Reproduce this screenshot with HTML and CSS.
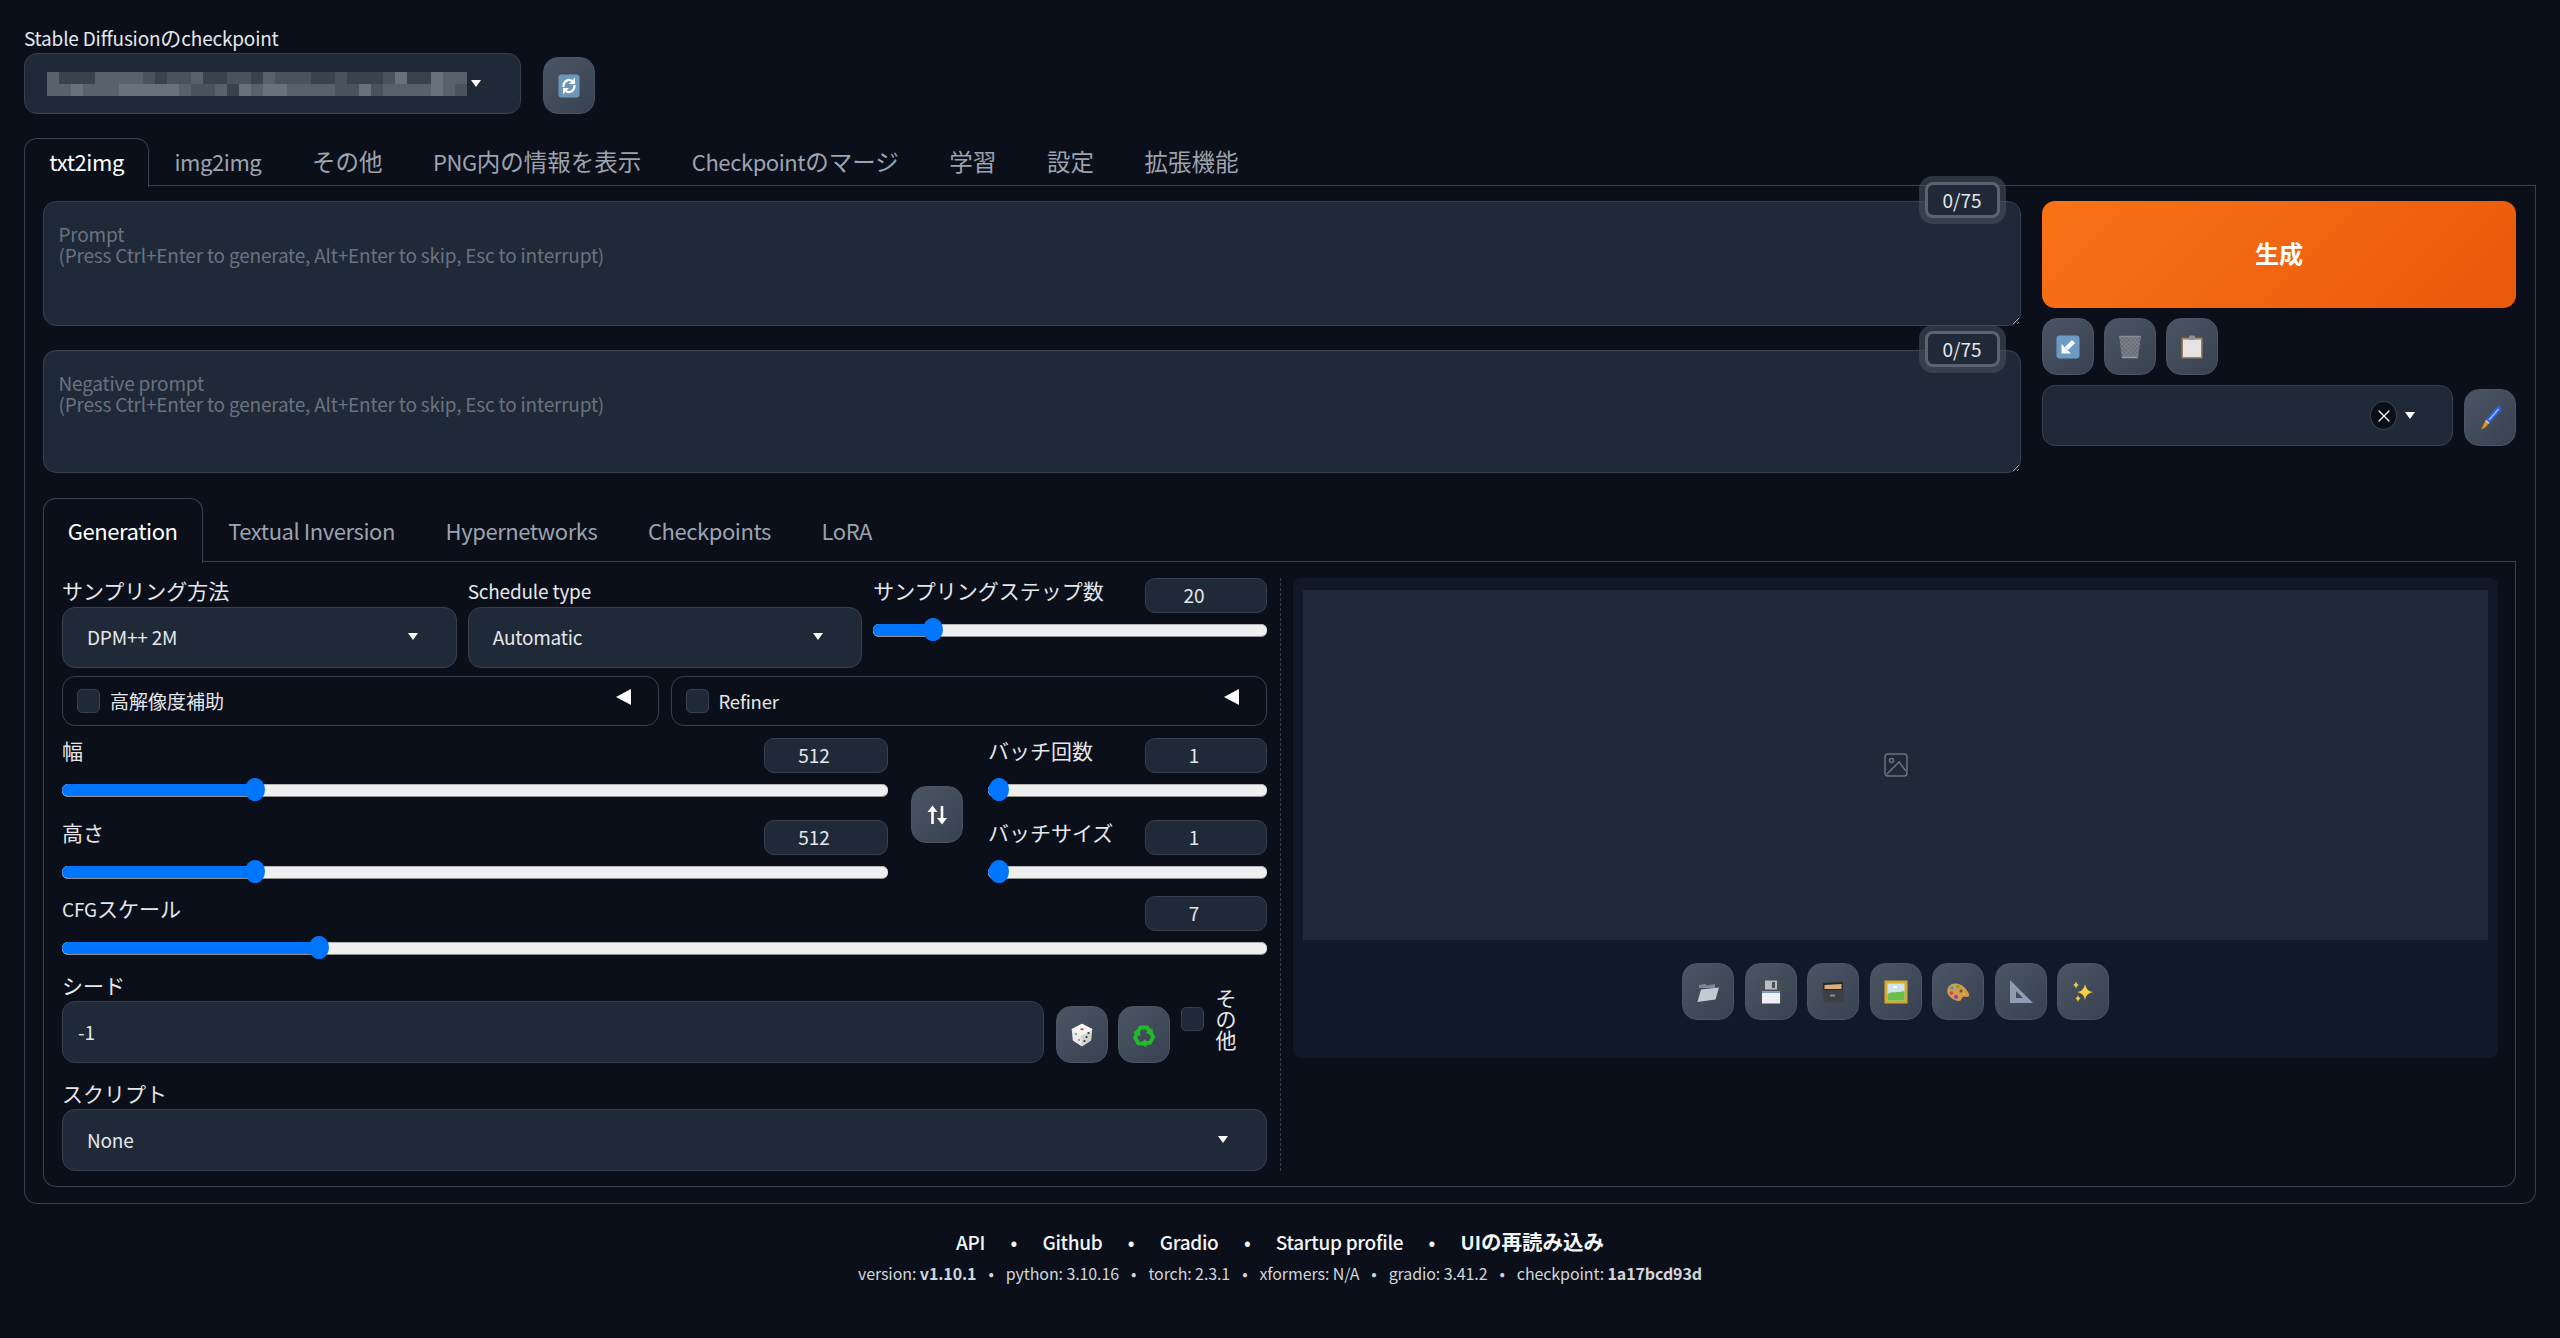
FILE: index.html
```html
<!DOCTYPE html>
<html>
<head>
    <title>Stable Diffusion</title>
    <link rel="stylesheet" href="styles.css">
</head>
<body>
    <div class="app">
        <div class="top-row">
            <div class="ckpt">
                <div class="field-label"><span class="lat">Stable Diffusion</span>の<span class="lat">checkpoint</span></div>
                <div class="dropdown ckpt-box">
                    <div class="mosaic">
                        <i class="c"></i><i class="a"></i><i class="a"></i><i class="a"></i><i class="c"></i><i class="c"></i><i class="c"></i><i class="c"></i><i class="b"></i><i class="a"></i><i class="b"></i><i class="b"></i><i class="c"></i><i class="a"></i><i class="a"></i><i class="b"></i><i class="b"></i><i class="a"></i><i class="c"></i><i class="b"></i><i class="b"></i><i class="b"></i><i class="a"></i><i class="a"></i><i class="b"></i><i class="a"></i><i class="a"></i><i class="a"></i><i class="b"></i><i class="d"></i><i class="a"></i><i class="a"></i><i class="d"></i><i class="c"></i><i class="c"></i>
                        <i class="c"></i><i class="c"></i><i class="d"></i><i class="c"></i><i class="c"></i><i class="c"></i><i class="d"></i><i class="d"></i><i class="d"></i><i class="d"></i><i class="d"></i><i class="c"></i><i class="b"></i><i class="b"></i><i class="c"></i><i class="a"></i><i class="d"></i><i class="c"></i><i class="d"></i><i class="d"></i><i class="c"></i><i class="c"></i><i class="c"></i><i class="c"></i><i class="b"></i><i class="b"></i><i class="d"></i><i class="b"></i><i class="c"></i><i class="c"></i><i class="c"></i><i class="c"></i><i class="d"></i><i class="c"></i><i class="b"></i>
                    </div>
                    <span class="caret"></span>
                </div>
            </div>
            <button class="tool">
                <svg class="ico" viewBox="0 0 24 24"><rect x="1.500" y="0.500" width="21" height="23" rx="3" fill="#6d97ba"/><path d="M6.500 13a5.500 6.500 0 0 1 9-5.500M17.500 11a5.500 6.500 0 0 1-9 5.500" fill="none" stroke="#fff" stroke-width="2.200"/><path d="M18 3.500v6.500h-6zM6 20.500v-6.500h6z" fill="#fff"/></svg>
            </button>
        </div>

        <div class="tabs main-tabs">
            <div class="tab active"><span class="lat">txt2img</span></div>
            <div class="tab"><span class="lat">img2img</span></div>
            <div class="tab">その他</div>
            <div class="tab"><span class="lat">PNG</span>内の情報を表示</div>
            <div class="tab"><span class="lat">Checkpoint</span>のマージ</div>
            <div class="tab">学習</div>
            <div class="tab">設定</div>
            <div class="tab">拡張機能</div>
        </div>

        <div class="panel">
            <div class="prompt-row">
                <div class="prompts">
                    <div class="prompt-wrap">
                        <span class="counter">0/75</span>
                        <textarea class="prompt" placeholder="Prompt&#10;(Press Ctrl+Enter to generate, Alt+Enter to skip, Esc to interrupt)"></textarea>
                    </div>
                    <div class="prompt-wrap neg">
                        <span class="counter">0/75</span>
                        <textarea class="prompt" placeholder="Negative prompt&#10;(Press Ctrl+Enter to generate, Alt+Enter to skip, Esc to interrupt)"></textarea>
                    </div>
                </div>
                <div class="actions">
                    <button class="generate">生成</button>
                    <div class="tool-row">
                        <button class="tool">
                            <svg class="ico" viewBox="0 0 24 24"><rect x="0.500" y="0.500" width="23" height="23" rx="3" fill="#6c9cc6"/><path d="M17.500 6.500l-7 7" stroke="#fff" stroke-width="4.500"/><path d="M5.500 18.500v-9.500l9.500 9.500z" fill="#fff"/></svg>
                        </button>
                        <button class="tool">
                            <svg class="ico" viewBox="0 0 24 24"><defs><pattern id="mesh" width="3" height="3" patternUnits="userSpaceOnUse" patternTransform="rotate(45)"><rect width="3" height="3" fill="#666d77"/><path d="M0 0h3M0 0v3" stroke="#8a9099" stroke-width="1"/></pattern></defs><path d="M1 1h22l-3 22h-16z" fill="url(#mesh)"/><path d="M1 1.500h22" stroke="#858b93" stroke-width="1.500"/><path d="M4 22.500h16" stroke="#9a9fa6" stroke-width="1.500"/></svg>
                        </button>
                        <button class="tool">
                            <svg class="ico" viewBox="0 0 24 24"><rect x="1.500" y="2.500" width="21" height="21" rx="1" fill="#a67e52"/><rect x="3" y="4.500" width="18" height="17.500" fill="#e4e4e4"/><rect x="9" y="0.500" width="6" height="4.500" rx="1" fill="#8b9097"/></svg>
                        </button>
                    </div>
                    <div class="style-row">
                        <div class="dropdown style-box">
                            <span class="clear"><svg viewBox="0 0 12 12"><path d="M1.500 1.500l9 9M10.500 1.500l-9 9" stroke="#fff" stroke-width="1.100"/></svg></span>
                            <span class="caret"></span>
                        </div>
                        <button class="tool">
                            <svg class="ico" viewBox="0 0 24 24"><path d="M21 2.500l-10.500 12" stroke="#2f62d6" stroke-width="5" stroke-linecap="round"/><path d="M20.500 3l-9.500 11" stroke="#9fc0f0" stroke-width="1.200"/><path d="M9.800 15.300l-1.300 1.500" stroke="#c9ccd0" stroke-width="4.500"/><path d="M7 15.500l3 2.500c-1 2.500-3.500 4.500-7 5.500 1.500-2 2.500-5.500 4-8z" fill="#e8920f"/></svg>
                        </button>
                    </div>
                </div>
            </div>

            <div class="tabs sub-tabs">
                <div class="tab active"><span class="lat">Generation</span></div>
                <div class="tab"><span class="lat">Textual Inversion</span></div>
                <div class="tab"><span class="lat">Hypernetworks</span></div>
                <div class="tab"><span class="lat">Checkpoints</span></div>
                <div class="tab"><span class="lat">LoRA</span></div>
            </div>

            <div class="panel inner">
                <div class="settings">
                    <div class="row-sampler">
                        <div class="select-field">
                            <div class="field-label">サンプリング方法</div>
                            <div class="dropdown">DPM++ 2M<span class="caret"></span></div>
                        </div>
                        <div class="select-field">
                            <div class="field-label"><span class="lat">Schedule type</span></div>
                            <div class="dropdown">Automatic<span class="caret"></span></div>
                        </div>
                        <div class="slider">
                            <div class="slider-head"><span>サンプリングステップ数</span><input class="num" value="20"></div>
                            <div class="track"><div class="fill" style="width: 60px"><span class="thumb"></span></div></div>
                        </div>
                    </div>

                    <div class="row-accordions">
                        <div class="accordion"><span class="check"></span><span class="acc-label">高解像度補助</span><span class="tri"></span></div>
                        <div class="accordion"><span class="check"></span><span class="acc-label"><span class="lat">Refiner</span></span><span class="tri"></span></div>
                    </div>

                    <div class="row-size">
                        <div class="size-col">
                            <div class="slider">
                                <div class="slider-head"><span>幅</span><input class="num wide" value="512"></div>
                                <div class="track"><div class="fill" style="width: 193px"><span class="thumb"></span></div></div>
                            </div>
                            <div class="slider">
                                <div class="slider-head"><span>高さ</span><input class="num wide" value="512"></div>
                                <div class="track"><div class="fill" style="width: 193px"><span class="thumb"></span></div></div>
                            </div>
                        </div>
                        <button class="tool swap">
                            <svg class="ico" viewBox="0 0 24 24"><path d="M7.500 21V5M17 3v16" stroke="#fff" stroke-width="2.600"/><path d="M2.500 9l5-6.500 5 6.500zM12 15l5 6.500 5-6.500z" fill="#fff"/></svg>
                        </button>
                        <div class="batch-col">
                            <div class="slider">
                                <div class="slider-head"><span>バッチ回数</span><input class="num" value="1"></div>
                                <div class="track"><div class="fill" style="width: 11px"><span class="thumb"></span></div></div>
                            </div>
                            <div class="slider">
                                <div class="slider-head"><span>バッチサイズ</span><input class="num" value="1"></div>
                                <div class="track"><div class="fill" style="width: 11px"><span class="thumb"></span></div></div>
                            </div>
                        </div>
                    </div>

                    <div class="slider cfg">
                        <div class="slider-head"><span><span class="lat">CFG</span>スケール</span><input class="num" value="7"></div>
                        <div class="track"><div class="fill" style="width: 257px"><span class="thumb"></span></div></div>
                    </div>

                    <div class="seed-block">
                        <div class="field-label">シード</div>
                        <div class="seed-row">
                            <input class="seed-input" value="-1">
                            <button class="tool">
                                <svg class="ico" viewBox="0 0 24 24" stroke-width="1.500" stroke-linejoin="round"><path d="M2.500 6.500L12 11.500V22.500L3.500 17z" fill="#eaeae7" stroke="#eaeae7"/><path d="M21.500 6.500L12 11.500V22.500L20.500 17z" fill="#d2d2ce" stroke="#d2d2ce"/><path d="M12 1.500L21.500 6.500 12 11.500 2.500 6.500z" fill="#f6f6f4" stroke="#f6f6f4"/><ellipse cx="12" cy="6.200" rx="1.800" ry="1" fill="#d9483b"/><circle cx="6" cy="11" r="0.900" fill="#777"/><circle cx="9" cy="17" r="0.900" fill="#777"/><circle cx="18.500" cy="10" r="1.100" fill="#2d2d2d"/><circle cx="16.500" cy="14" r="1.100" fill="#2d2d2d"/><circle cx="14.500" cy="18" r="1.100" fill="#2d2d2d"/></svg>
                            </button>
                            <button class="tool">
                                <svg class="ico" viewBox="0 0 24 24"><g id="rec-arrow"><path d="M3.500 12.500L8.500 4.500h6.500l2 3.500" fill="none" stroke="#20ba2b" stroke-width="3.800"/><path d="M20.800 5.500L13.500 10 20.500 12.500z" fill="#20ba2b"/></g><use href="#rec-arrow" transform="rotate(120 12 13)"/><use href="#rec-arrow" transform="rotate(240 12 13)"/></svg>
                            </button>
                            <span class="check seed-check"></span>
                            <span class="vertical">その他</span>
                        </div>
                    </div>

                    <div class="script-block">
                        <div class="field-label">スクリプト</div>
                        <div class="dropdown">None<span class="caret"></span></div>
                    </div>
                </div>

                <div class="results">
                    <div class="image-area">
                        <svg class="placeholder" viewBox="0 0 24 24" fill="none" stroke="#6b7280" stroke-width="1.500"><rect x="1" y="1" width="22" height="22" rx="3"/><circle cx="7.500" cy="7.500" r="2"/><path d="M3 21L15 9l7 9"/></svg>
                    </div>
                    <div class="result-tools">
                        <button class="tool">
                            <svg class="ico" viewBox="0 0 24 24"><path d="M3 8V5l6-1 2 1.500 8-1.500v4z" fill="#7f8994"/><path d="M1.500 22L5 9.500l18-2-3.500 12z" fill="#c3cad1"/></svg>
                        </button>
                        <button class="tool">
                            <svg class="ico" viewBox="0 0 24 24"><rect x="0.500" y="0.500" width="23" height="23" fill="#4a4e55"/><rect x="6" y="0.500" width="12" height="9" fill="#b9bcc0"/><rect x="13" y="2" width="3" height="6" fill="#4a4e55"/><rect x="3" y="11.500" width="18" height="12" fill="#eef1f4"/><rect x="3" y="11.500" width="18" height="1.500" fill="#7f9ac0"/></svg>
                        </button>
                        <button class="tool">
                            <svg class="ico" viewBox="0 0 24 24"><path d="M2 3l20-1v8H2z" fill="#24272c"/><path d="M3.500 5l17-1v5h-17z" fill="#d9ae78"/><path d="M1 10h22v11l-4 1.500H3z" fill="#3c4046"/><path d="M9 14.500h5v2H9z" fill="#8a8e94"/></svg>
                        </button>
                        <button class="tool">
                            <svg class="ico" viewBox="0 0 24 24"><rect x="0.500" y="0.500" width="23" height="23" fill="#d7ab2e"/><rect x="3.500" y="3.500" width="17" height="17" fill="#cfe4ea"/><path d="M3.500 14c5-3 10-1 17-3v9.500h-17z" fill="#6cc04a"/><path d="M9 6h4v2H9z" fill="#fff"/></svg>
                        </button>
                        <button class="tool">
                            <svg class="ico" viewBox="0 0 24 24"><path d="M3 6c4-4 11-3 15 1 3 3 6 7 5 9-1 2-4 0-6 1-2 1-1 4-4 4C8 21 3 17 1.500 13 .8 11 1.500 8 3 6z" fill="#d49a4c"/><circle cx="6" cy="8" r="1.800" fill="#3f9ac9"/><circle cx="12" cy="6.500" r="1.800" fill="#5fb04a"/><circle cx="5.500" cy="13" r="1.800" fill="#c8443c"/><circle cx="10" cy="17" r="2" fill="#8a3fb8"/><circle cx="15" cy="11" r="1.500" fill="#7a5225"/><circle cx="18" cy="14" r="1.200" fill="#e0b93a"/></svg>
                        </button>
                        <button class="tool">
                            <svg class="ico" viewBox="0 0 24 24"><path fill-rule="evenodd" d="M1 0l23 23H1zM7 11v7h7z" fill="#8f9db3"/></svg>
                        </button>
                        <button class="tool">
                            <svg class="ico" viewBox="0 0 24 24" fill="#f6cf3e"><path d="M14 4q1 7 8 8-7 1-8 8-1-7-8-8 7-1 8-8z"/><path d="M5 1q.5 3.500 3 4-2.500.5-3 4-.5-3.500-3-4 2.500-.5 3-4z"/><path d="M7 15q.5 3 2.500 3.500-2 .5-2.500 3.500-.5-3-2.500-3.500 2-.5 2.500-3.500z"/></svg>
                        </button>
                    </div>
                </div>
            </div>
        </div>

        <footer class="footer">
            <div class="links">
                <a>API</a><span class="dot">•</span><a>Github</a><span class="dot">•</span><a>Gradio</a><span class="dot">•</span><a>Startup profile</a><span class="dot">•</span><b><a>UI</a>の再読み込み</b>
            </div>
            <div class="versions">
                <span>version: <b>v1.10.1</b></span><span class="dot">•</span><span>python: 3.10.16</span><span class="dot">•</span><span>torch: 2.3.1</span><span class="dot">•</span><span>xformers: N/A</span><span class="dot">•</span><span>gradio: 3.41.2</span><span class="dot">•</span><span>checkpoint: <b>1a17bcd93d</b></span>
            </div>
        </footer>
    </div>
</body>
</html>
```
FILE: styles.css
```css
* {
    box-sizing: border-box;
}
body {
    margin: 0;
    background: #0b0f19;
    color: #e5e7eb;
    font-family: "Noto Sans CJK JP", "Noto Sans", sans-serif;
    font-size: 21px;
}
input, textarea, button {
    font-family: inherit;
    font-size: inherit;
    color: inherit;
    outline: none;
}
/* latin glyphs of the CJK face run wide, pull them in */
.lat {
    font-size: 19px;
    letter-spacing: -0.2px;
}
.app {
    padding: 28px 24px 0;
}

/* top row */
.top-row {
    display: flex;
    align-items: flex-end;
    gap: 22px;
}
.ckpt {
    width: 497px;
}
.field-label {
    height: 25px;
    line-height: 18px;
}
.dropdown {
    display: flex;
    align-items: center;
    justify-content: space-between;
    height: 61px;
    padding: 0 38px 2px 24px;
    font-size: 19px;
    letter-spacing: -0.2px;
    background: #1f2937;
    border: 1.5px solid #374151;
    border-radius: 13px;
}
.ckpt-box {
    justify-content: flex-start;
    gap: 9px;
    padding: 0 0 0 22px;
}
.mosaic {
    display: grid;
    grid-template-columns: repeat(35, 12px);
    grid-auto-rows: 12px;
    width: 415px;
    filter: blur(0.6px);
}
.mosaic i {
    display: block;
}
.mosaic .a { background: #3a424d; }
.mosaic .b { background: #4a525d; }
.mosaic .c { background: #59616c; }
.mosaic .d { background: #69717c; }
.caret {
    width: 0;
    height: 0;
    border-left: 5.5px solid transparent;
    border-right: 5.5px solid transparent;
    border-top: 7px solid #fff;
}
.tool {
    display: flex;
    align-items: center;
    justify-content: center;
    flex: none;
    width: 52px;
    height: 57px;
    padding: 0;
    background: linear-gradient(135deg, #4b5563, #374151);
    border: 1.5px solid #4b5563;
    border-radius: 15px;
}
.ico {
    width: 24px;
    height: 24px;
}

/* tabs */
.tabs {
    display: flex;
    border-bottom: 1.5px solid #374151;
}
.tab {
    padding: 0 24.3px;
    color: #9ca3af;
    font-size: 23.5px;
    white-space: nowrap;
    border: 1.5px solid transparent;
    border-bottom: none;
    margin-bottom: -1.5px;
    border-radius: 13px 13px 0 0;
}
.tab .lat {
    font-size: 22px;
    letter-spacing: -0.43px;
}
.tab.active {
    color: #fff;
    border-color: #374151;
    background: #0b0f19;
}
.main-tabs {
    height: 48px;
    margin-top: 24px;
}
.main-tabs .tab {
    line-height: 44px;
}
.sub-tabs {
    height: 64px;
    margin-top: 25px;
}
.sub-tabs .tab {
    line-height: 63px;
}

/* panels */
.panel {
    height: 1019px;
    margin-top: -1px;
    padding: 16px 19px 0 17.5px;
    border: 1.5px solid #374151;
    border-top: none;
    border-radius: 0 0 13px 13px;
}
.panel.inner {
    display: flex;
    align-items: flex-start;
    height: 625px;
    width: 2473px;
    margin-top: 0;
    padding: 16px 18px 0 18.5px;
}

/* prompts */
.prompt-row {
    display: flex;
    gap: 21.5px;
}
.prompts {
    display: flex;
    flex-direction: column;
    gap: 24px;
    width: 1979px;
}
.prompt-wrap {
    position: relative;
    height: 125px;
}
.prompt-wrap.neg {
    height: 123px;
}
.prompt {
    display: block;
    width: 100%;
    height: 100%;
    padding: 21px 15px;
    font-size: 19px;
    letter-spacing: -0.2px;
    line-height: 21px;
    background: #1f2937;
    border: 1.5px solid #374151;
    border-radius: 13px;
}
.prompt::placeholder {
    color: #6b7280;
}
.counter {
    position: absolute;
    top: -19px;
    right: 21px;
    z-index: 1;
    width: 75px;
    height: 36px;
    font-size: 19px;
    line-height: 29px;
    text-align: center;
    background: #1f2937;
    border: 3px solid #5b6370;
    border-radius: 8px;
    box-shadow: 0 0 0 6px rgba(75, 85, 99, 0.55);
}

/* right column */
.actions {
    width: 474px;
}
.generate {
    width: 100%;
    height: 107px;
    padding-bottom: 6px;
    font-size: 24px;
    font-weight: 700;
    color: #fff;
    background: linear-gradient(135deg, #f97316, #ea580c);
    border: none;
    border-radius: 13px;
}
.tool-row {
    display: flex;
    gap: 10px;
    margin-top: 10px;
}
.style-row {
    display: flex;
    align-items: flex-end;
    gap: 11px;
    margin-top: 10px;
}
.style-box {
    width: 411px;
    justify-content: flex-end;
    gap: 8px;
    padding: 0 37px 0 0;
}
.clear {
    display: flex;
    align-items: center;
    justify-content: center;
    width: 27px;
    height: 29px;
    background: #0b0f19;
    border: 1px solid #374151;
    border-radius: 50%;
}
.clear svg {
    width: 14px;
    height: 14px;
}

/* settings column */
.settings {
    flex: none;
    width: 1219px;
    padding-right: 13px;
    border-right: 1px dashed #374151;
}
.row-sampler {
    display: flex;
    gap: 11px;
}
.select-field {
    width: 395px;
}
.select-field .field-label {
    height: 29px;
    line-height: 24px;
}
.row-sampler .slider {
    width: 394px;
}
.slider-head {
    display: flex;
    align-items: flex-start;
    justify-content: space-between;
    height: 35px;
    line-height: 24px;
}
.num {
    width: 122px;
    height: 35px;
    padding: 0 24px 2px 0;
    font-size: 19px;
    text-align: center;
    background: #1f2937;
    border: 1.5px solid #374151;
    border-radius: 10px;
}
.num.wide {
    width: 124px;
}
.track {
    height: 13px;
    margin-top: 11px;
    background: #efefef;
    border-bottom: 1px solid #8f8f8f;
    border-radius: 6px;
    box-shadow: inset 0 1px 0 #b5b5b5;
}
.fill {
    position: relative;
    height: 12px;
    background: #0075ff;
    border-radius: 6px 0 0 6px;
}
.thumb {
    position: absolute;
    top: -6px;
    right: -10px;
    width: 20px;
    height: 23px;
    background: #0075ff;
    border-radius: 50%;
}
.row-accordions {
    display: flex;
    gap: 12px;
    margin-top: 8px;
}
.accordion {
    display: flex;
    align-items: center;
    flex: 1;
    height: 50px;
    padding: 0 27px 0 14px;
    border: 1.5px solid #374151;
    border-radius: 13px;
}
.check {
    flex: none;
    width: 23px;
    height: 24px;
    background: #1f2937;
    border: 1.5px solid #374151;
    border-radius: 5px;
}
.acc-label {
    flex: 1;
    margin: -2px 0 0 10px;
    font-size: 19px;
}
.acc-label .lat {
    font-size: 18.5px;
}
.tri {
    margin-top: -8px;
    border-top: 8px solid transparent;
    border-bottom: 8px solid transparent;
    border-right: 15px solid #fff;
}
.row-size {
    display: flex;
    margin-top: 12px;
}
.size-col {
    display: flex;
    flex-direction: column;
    gap: 23px;
    width: 826px;
}
.swap {
    align-self: center;
    margin: 12px 25px 0 23px;
}
.batch-col {
    display: flex;
    flex-direction: column;
    gap: 23px;
    flex: 1;
}
.cfg {
    margin-top: 17px;
}
.seed-block {
    margin-top: 16px;
}
.seed-block .field-label,
.script-block .field-label {
    height: 30px;
    line-height: 28px;
}
.seed-row {
    display: flex;
    align-items: flex-end;
    height: 62px;
}
.seed-input {
    flex: none;
    width: 982px;
    height: 62px;
    padding: 0 15px 2px;
    font-size: 19px;
    background: #1f2937;
    border: 1.5px solid #374151;
    border-radius: 13px;
}
.seed-row .tool {
    margin-left: 12px;
}
.seed-row .tool + .tool {
    margin-left: 10px;
}
.seed-check {
    align-self: flex-start;
    margin: 6px 0 0 11px;
}
.vertical {
    align-self: flex-start;
    width: 22px;
    margin: -14px 0 0 11px;
    line-height: 21px;
    text-align: center;
}
.script-block {
    margin-top: 16px;
}
.script-block .dropdown {
    height: 62px;
}

/* results column */
.results {
    flex: none;
    width: 1205px;
    height: 480px;
    margin-left: 12px;
    padding: 12px 10px;
    background: #111827;
    border-radius: 8px;
}
.image-area {
    display: flex;
    align-items: center;
    justify-content: center;
    height: 350px;
    background: #1f2937;
}
.placeholder {
    width: 24px;
    height: 24px;
}
.result-tools {
    display: flex;
    justify-content: center;
    gap: 10.5px;
    margin-top: 23px;
}

/* footer */
.footer {
    text-align: center;
    margin-top: 23px;
}
.links {
    font-size: 19px;
    letter-spacing: -0.3px;
    line-height: 28px;
    font-weight: 500;
    color: #f3f4f6;
}
.links b {
    font-size: 20.5px;
    letter-spacing: 0;
    font-weight: 700;
}
.links b a {
    font-size: 19px;
}
.links .dot {
    margin: 0 25.4px;
}
.versions {
    margin-top: 6px;
    font-size: 16px;
    letter-spacing: -0.1px;
    line-height: 22px;
    color: #d1d5db;
}
.versions .dot {
    margin: 0 12px;
}
```
